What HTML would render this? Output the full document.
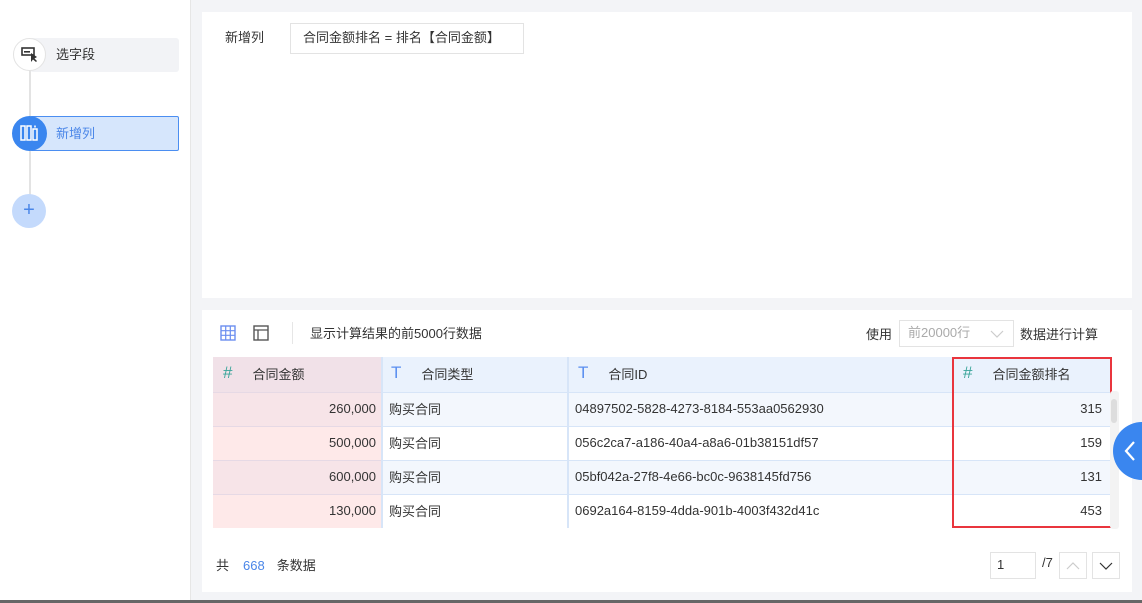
<!DOCTYPE html>
<html><head><meta charset="utf-8"><style>
*{margin:0;padding:0;box-sizing:border-box}
body{width:1142px;height:603px;overflow:hidden;background:#f3f4f7;font-family:"Liberation Sans","Noto Sans CJK SC",sans-serif;font-size:13px;color:#333;position:relative}
.abs{position:absolute}
.side{left:0;top:0;width:191px;height:601px;background:#fff;border-right:1px solid #e6e6e6}
.panel{background:#fff}
.cell{position:absolute;display:flex;align-items:center;font-size:13px;color:#333;white-space:nowrap;padding-bottom:3px}
.ic{font-size:17px;margin-right:20px}
.bot{left:0;top:600px;width:1142px;height:3px;background:#666}
</style></head><body>
<div class="abs side"></div>
<div class="abs" style="left:29px;top:55px;width:2px;height:160px;background:#e3e3e3"></div>
<div class="abs" style="left:30px;top:38px;width:149px;height:34px;background:#f2f3f6;border-radius:3px"></div>
<div class="abs" style="left:13px;top:38px;width:33px;height:33px;border-radius:50%;background:#fff;border:1px solid #e3e3e3"></div>
<svg class="abs" style="left:20px;top:46px" width="20" height="18" viewBox="0 0 20 18"><rect x="2" y="2" width="12" height="7" fill="none" stroke="#333" stroke-width="1.6"/><rect x="4" y="5" width="6" height="1.6" fill="#333"/><path d="M11 7 L11 16 L13 13.5 L16 16 L17 15 L14.5 12.5 L17 11 Z" fill="#333"/></svg>
<div class="abs" style="left:56px;top:44px;font-size:13px;color:#333">选字段</div>
<div class="abs" style="left:30px;top:116px;width:149px;height:35px;background:#d6e6fc;border:1px solid #4b8ef1;border-radius:2px"></div>
<div class="abs" style="left:12px;top:116px;width:35px;height:35px;border-radius:50%;background:#3a86ef"></div>
<svg class="abs" style="left:20px;top:124px" width="19" height="18" viewBox="0 0 19 18"><rect x="1" y="2" width="4" height="14" fill="none" stroke="#fff" stroke-width="1.5"/><rect x="7" y="2" width="4" height="14" fill="none" stroke="#fff" stroke-width="1.5"/><rect x="13" y="5" width="4" height="11" fill="none" stroke="#fff" stroke-width="1.5"/><rect x="14.2" y="1.5" width="1.6" height="2" fill="#fff"/></svg>
<div class="abs" style="left:56px;top:123px;font-size:13px;color:#4a86e8">新增列</div>
<div class="abs" style="left:12px;top:194px;width:34px;height:34px;border-radius:50%;background:#c4dafc;color:#4a86e8;font-size:20px;line-height:33px;text-align:center">+</div>

<div class="abs panel" style="left:202px;top:12px;width:930px;height:286px"></div>
<div class="abs" style="left:225px;top:27px;font-size:13px;color:#333">新增列</div>
<div class="abs" style="left:290px;top:23px;width:234px;height:31px;border:1px solid #e3e3e3;padding-left:12px;line-height:27px;font-size:13px;color:#333">合同金额排名 = 排名【合同金额】</div>

<div class="abs panel" style="left:202px;top:310px;width:930px;height:282px"></div>
<svg class="abs" style="left:220px;top:325px" width="16" height="16" viewBox="0 0 16 16"><rect x="1" y="1" width="14" height="14" fill="none" stroke="#6b8ef0" stroke-width="1.4"/><path d="M1 5.7H15M1 10.3H15M5.7 1V15M10.3 1V15" stroke="#6b8ef0" stroke-width="1.2"/></svg>
<svg class="abs" style="left:253px;top:325px" width="16" height="16" viewBox="0 0 16 16"><rect x="1" y="1" width="14" height="14" fill="none" stroke="#555" stroke-width="1.4"/><path d="M1 5H15M5 5V15" stroke="#555" stroke-width="1.3"/></svg>
<div class="abs" style="left:292px;top:322px;width:1px;height:22px;background:#e6e6e6"></div>
<div class="abs" style="left:310px;top:323px;font-size:13px">显示计算结果的前5000行数据</div>
<div class="abs" style="left:866px;top:324px;font-size:13px">使用</div>
<div class="abs" style="left:899px;top:320px;width:115px;height:27px;border:1px solid #e3e3e3;color:#aaa;line-height:23px;padding-left:8px;font-size:13px">前20000行</div>
<svg class="abs" style="left:990px;top:329px" width="14" height="10" viewBox="0 0 14 10"><path d="M1 2L7 8L13 2" fill="none" stroke="#ccc" stroke-width="1.2"/></svg>
<div class="abs" style="left:1020px;top:324px;font-size:13px">数据进行计算</div>

<div class="abs" style="left:213px;top:357px;width:897px;height:35px;background:#eaf2fd"></div>
<div class="abs" style="left:213px;top:392px;width:897px;height:35px;background:#f3f7fd"></div>
<div class="abs" style="left:213px;top:427px;width:897px;height:34px;background:#fff"></div>
<div class="abs" style="left:213px;top:461px;width:897px;height:34px;background:#f3f7fd"></div>
<div class="abs" style="left:213px;top:495px;width:897px;height:33px;background:#fff"></div>
<div class="abs" style="left:213px;top:426px;width:897px;height:1px;background:#d7e5f8"></div>
<div class="abs" style="left:213px;top:392px;width:897px;height:1px;background:#d7e5f8"></div>
<div class="abs" style="left:213px;top:460px;width:897px;height:1px;background:#d7e5f8"></div>
<div class="abs" style="left:213px;top:494px;width:897px;height:1px;background:#d7e5f8"></div>
<div class="abs" style="left:381px;top:357px;width:2px;height:171px;background:#d7e5f8"></div>
<div class="abs" style="left:567px;top:357px;width:2px;height:171px;background:#d7e5f8"></div>
<div class="abs" style="left:213px;top:357px;width:168px;height:171px;background:rgba(252,200,200,0.4)"></div>

<div class="cell" style="left:223px;top:357px;height:35px"><span class="ic" style="color:#3aa59a">#</span>合同金额</div>
<div class="cell" style="left:391px;top:357px;height:35px"><span class="ic" style="color:#5b8ff0">T</span>合同类型</div>
<div class="cell" style="left:578px;top:357px;height:35px"><span class="ic" style="color:#5b8ff0">T</span>合同ID</div>
<div class="cell" style="left:963px;top:357px;height:35px"><span class="ic" style="color:#3aa59a">#</span>合同金额排名</div>

<div class="cell" style="left:213px;width:163px;justify-content:flex-end;top:392px;height:35px">260,000</div>
<div class="cell" style="left:213px;width:163px;justify-content:flex-end;top:427px;height:34px">500,000</div>
<div class="cell" style="left:213px;width:163px;justify-content:flex-end;top:461px;height:34px">600,000</div>
<div class="cell" style="left:213px;width:163px;justify-content:flex-end;top:495px;height:33px">130,000</div>
<div class="cell" style="left:389px;top:392px;height:35px">购买合同</div>
<div class="cell" style="left:389px;top:427px;height:34px">购买合同</div>
<div class="cell" style="left:389px;top:461px;height:34px">购买合同</div>
<div class="cell" style="left:389px;top:495px;height:33px">购买合同</div>
<div class="cell" style="left:575px;top:392px;height:35px">04897502-5828-4273-8184-553aa0562930</div>
<div class="cell" style="left:575px;top:427px;height:34px">056c2ca7-a186-40a4-a8a6-01b38151df57</div>
<div class="cell" style="left:575px;top:461px;height:34px">05bf042a-27f8-4e66-bc0c-9638145fd756</div>
<div class="cell" style="left:575px;top:495px;height:33px">0692a164-8159-4dda-901b-4003f432d41c</div>
<div class="cell" style="left:952px;width:150px;justify-content:flex-end;top:392px;height:35px">315</div>
<div class="cell" style="left:952px;width:150px;justify-content:flex-end;top:427px;height:34px">159</div>
<div class="cell" style="left:952px;width:150px;justify-content:flex-end;top:461px;height:34px">131</div>
<div class="cell" style="left:952px;width:150px;justify-content:flex-end;top:495px;height:33px">453</div>
<div class="abs" style="left:952px;top:357px;width:160px;height:171px;border:2px solid #e9353d"></div>
<div class="abs" style="left:1110px;top:391px;width:9px;height:138px;background:#f3f3f3;border-radius:3px"></div>
<div class="abs" style="left:1111px;top:399px;width:6px;height:24px;background:#ddd;border-radius:3px"></div>
<div class="abs" style="left:1113px;top:422px;width:58px;height:58px;border-radius:50%;background:#3a86ef"></div>
<svg class="abs" style="left:1123px;top:440px" width="14" height="22" viewBox="0 0 14 22"><path d="M11 2L3 11L11 20" fill="none" stroke="#fff" stroke-width="2.2"/></svg>

<div class="abs" style="left:216px;top:555px;font-size:13px">共<span style="color:#4a86e8;margin:0 12px 0 14px">668</span>条数据</div>
<div class="abs" style="left:990px;top:552px;width:46px;height:27px;border:1px solid #e3e3e3;line-height:23px;padding-left:6px;font-size:13px">1</div>
<div class="abs" style="left:1042px;top:555px;font-size:13px">/7</div>
<div class="abs" style="left:1059px;top:552px;width:28px;height:27px;border:1px solid #e3e3e3"></div>
<svg class="abs" style="left:1066px;top:561px" width="14" height="9" viewBox="0 0 14 9"><path d="M1 8L7 2L13 8" fill="none" stroke="#ccc" stroke-width="1.2"/></svg>
<div class="abs" style="left:1092px;top:552px;width:28px;height:27px;border:1px solid #e3e3e3"></div>
<svg class="abs" style="left:1099px;top:562px" width="14" height="9" viewBox="0 0 14 9"><path d="M1 1L7 7L13 1" fill="none" stroke="#333" stroke-width="1.2"/></svg>
<div class="abs bot"></div>
</body></html>
